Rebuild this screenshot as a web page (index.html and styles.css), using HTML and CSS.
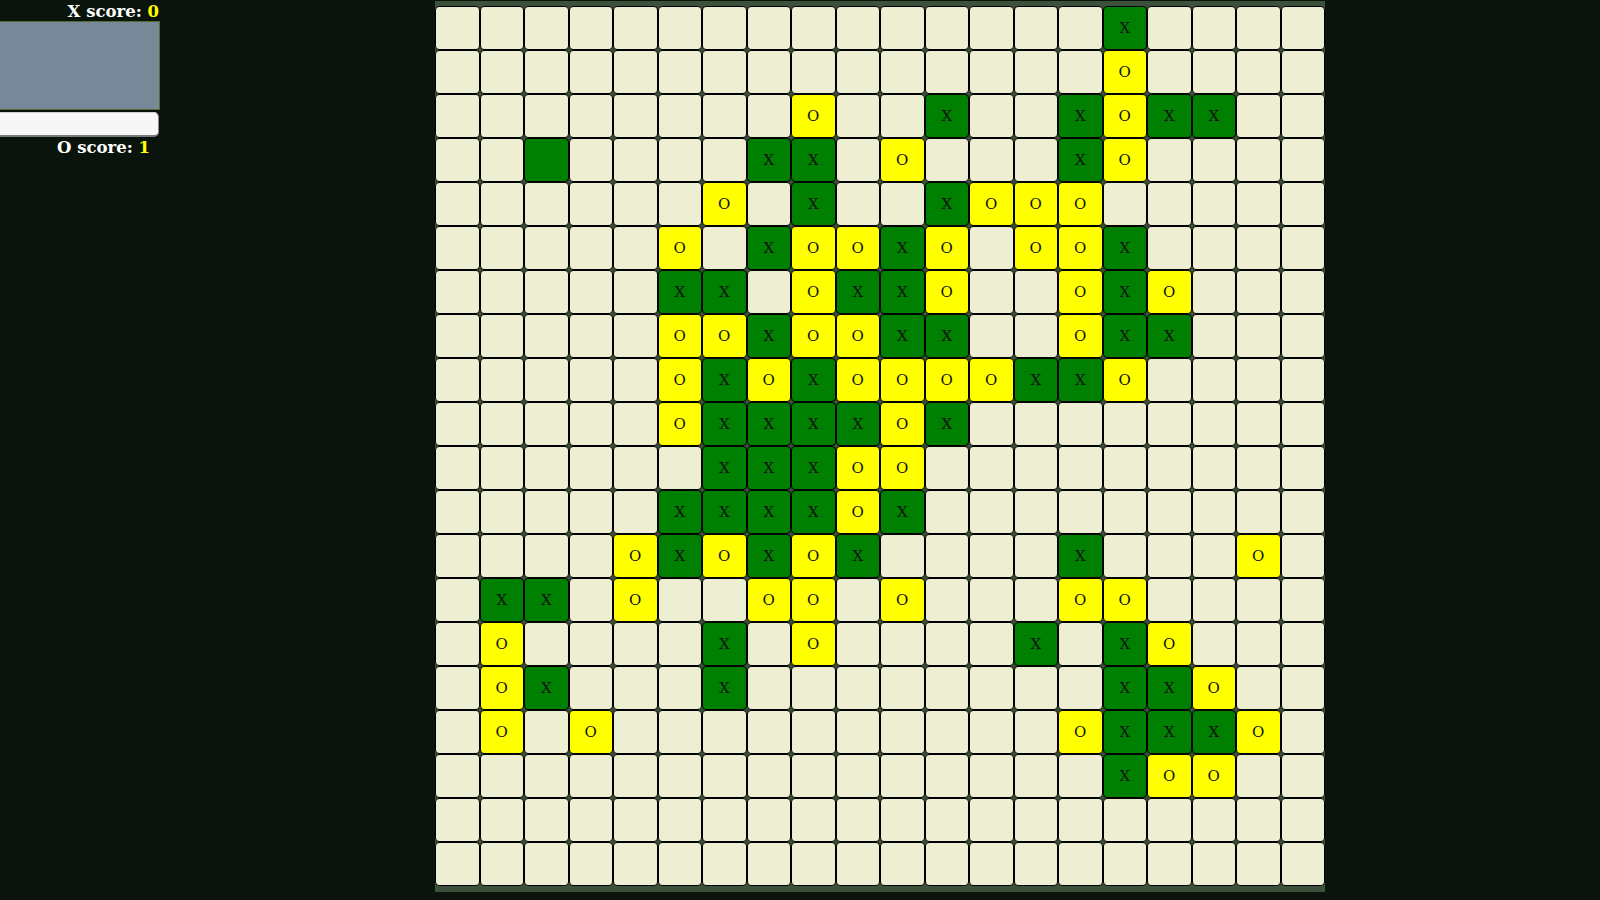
FILE: index.html
```html
<!DOCTYPE html>
<html>
<head>
<meta charset="utf-8">
<title>Board</title>
<link rel="stylesheet" href="styles.css">
</head>
<body>
<div class="page">
  <div class="panel">
    <div class="score score-x">X score: <span class="num">0</span></div>
    <div class="preview"></div>
    <div class="field"></div>
    <div class="score score-o">O score: <span class="num">1</span></div>
  </div>
  <div class="board">
<div class="c"></div><div class="c"></div><div class="c"></div><div class="c"></div><div class="c"></div><div class="c"></div><div class="c"></div><div class="c"></div><div class="c"></div><div class="c"></div><div class="c"></div><div class="c"></div><div class="c"></div><div class="c"></div><div class="c"></div><div class="c x">X</div><div class="c"></div><div class="c"></div><div class="c"></div><div class="c"></div>
<div class="c"></div><div class="c"></div><div class="c"></div><div class="c"></div><div class="c"></div><div class="c"></div><div class="c"></div><div class="c"></div><div class="c"></div><div class="c"></div><div class="c"></div><div class="c"></div><div class="c"></div><div class="c"></div><div class="c"></div><div class="c o">O</div><div class="c"></div><div class="c"></div><div class="c"></div><div class="c"></div>
<div class="c"></div><div class="c"></div><div class="c"></div><div class="c"></div><div class="c"></div><div class="c"></div><div class="c"></div><div class="c"></div><div class="c o">O</div><div class="c"></div><div class="c"></div><div class="c x">X</div><div class="c"></div><div class="c"></div><div class="c x">X</div><div class="c o">O</div><div class="c x">X</div><div class="c x">X</div><div class="c"></div><div class="c"></div>
<div class="c"></div><div class="c"></div><div class="c g"></div><div class="c"></div><div class="c"></div><div class="c"></div><div class="c"></div><div class="c x">X</div><div class="c x">X</div><div class="c"></div><div class="c o">O</div><div class="c"></div><div class="c"></div><div class="c"></div><div class="c x">X</div><div class="c o">O</div><div class="c"></div><div class="c"></div><div class="c"></div><div class="c"></div>
<div class="c"></div><div class="c"></div><div class="c"></div><div class="c"></div><div class="c"></div><div class="c"></div><div class="c o">O</div><div class="c"></div><div class="c x">X</div><div class="c"></div><div class="c"></div><div class="c x">X</div><div class="c o">O</div><div class="c o">O</div><div class="c o">O</div><div class="c"></div><div class="c"></div><div class="c"></div><div class="c"></div><div class="c"></div>
<div class="c"></div><div class="c"></div><div class="c"></div><div class="c"></div><div class="c"></div><div class="c o">O</div><div class="c"></div><div class="c x">X</div><div class="c o">O</div><div class="c o">O</div><div class="c x">X</div><div class="c o">O</div><div class="c"></div><div class="c o">O</div><div class="c o">O</div><div class="c x">X</div><div class="c"></div><div class="c"></div><div class="c"></div><div class="c"></div>
<div class="c"></div><div class="c"></div><div class="c"></div><div class="c"></div><div class="c"></div><div class="c x">X</div><div class="c x">X</div><div class="c"></div><div class="c o">O</div><div class="c x">X</div><div class="c x">X</div><div class="c o">O</div><div class="c"></div><div class="c"></div><div class="c o">O</div><div class="c x">X</div><div class="c o">O</div><div class="c"></div><div class="c"></div><div class="c"></div>
<div class="c"></div><div class="c"></div><div class="c"></div><div class="c"></div><div class="c"></div><div class="c o">O</div><div class="c o">O</div><div class="c x">X</div><div class="c o">O</div><div class="c o">O</div><div class="c x">X</div><div class="c x">X</div><div class="c"></div><div class="c"></div><div class="c o">O</div><div class="c x">X</div><div class="c x">X</div><div class="c"></div><div class="c"></div><div class="c"></div>
<div class="c"></div><div class="c"></div><div class="c"></div><div class="c"></div><div class="c"></div><div class="c o">O</div><div class="c x">X</div><div class="c o">O</div><div class="c x">X</div><div class="c o">O</div><div class="c o">O</div><div class="c o">O</div><div class="c o">O</div><div class="c x">X</div><div class="c x">X</div><div class="c o">O</div><div class="c"></div><div class="c"></div><div class="c"></div><div class="c"></div>
<div class="c"></div><div class="c"></div><div class="c"></div><div class="c"></div><div class="c"></div><div class="c o">O</div><div class="c x">X</div><div class="c x">X</div><div class="c x">X</div><div class="c x">X</div><div class="c o">O</div><div class="c x">X</div><div class="c"></div><div class="c"></div><div class="c"></div><div class="c"></div><div class="c"></div><div class="c"></div><div class="c"></div><div class="c"></div>
<div class="c"></div><div class="c"></div><div class="c"></div><div class="c"></div><div class="c"></div><div class="c"></div><div class="c x">X</div><div class="c x">X</div><div class="c x">X</div><div class="c o">O</div><div class="c o">O</div><div class="c"></div><div class="c"></div><div class="c"></div><div class="c"></div><div class="c"></div><div class="c"></div><div class="c"></div><div class="c"></div><div class="c"></div>
<div class="c"></div><div class="c"></div><div class="c"></div><div class="c"></div><div class="c"></div><div class="c x">X</div><div class="c x">X</div><div class="c x">X</div><div class="c x">X</div><div class="c o">O</div><div class="c x">X</div><div class="c"></div><div class="c"></div><div class="c"></div><div class="c"></div><div class="c"></div><div class="c"></div><div class="c"></div><div class="c"></div><div class="c"></div>
<div class="c"></div><div class="c"></div><div class="c"></div><div class="c"></div><div class="c o">O</div><div class="c x">X</div><div class="c o">O</div><div class="c x">X</div><div class="c o">O</div><div class="c x">X</div><div class="c"></div><div class="c"></div><div class="c"></div><div class="c"></div><div class="c x">X</div><div class="c"></div><div class="c"></div><div class="c"></div><div class="c o">O</div><div class="c"></div>
<div class="c"></div><div class="c x">X</div><div class="c x">X</div><div class="c"></div><div class="c o">O</div><div class="c"></div><div class="c"></div><div class="c o">O</div><div class="c o">O</div><div class="c"></div><div class="c o">O</div><div class="c"></div><div class="c"></div><div class="c"></div><div class="c o">O</div><div class="c o">O</div><div class="c"></div><div class="c"></div><div class="c"></div><div class="c"></div>
<div class="c"></div><div class="c o">O</div><div class="c"></div><div class="c"></div><div class="c"></div><div class="c"></div><div class="c x">X</div><div class="c"></div><div class="c o">O</div><div class="c"></div><div class="c"></div><div class="c"></div><div class="c"></div><div class="c x">X</div><div class="c"></div><div class="c x">X</div><div class="c o">O</div><div class="c"></div><div class="c"></div><div class="c"></div>
<div class="c"></div><div class="c o">O</div><div class="c x">X</div><div class="c"></div><div class="c"></div><div class="c"></div><div class="c x">X</div><div class="c"></div><div class="c"></div><div class="c"></div><div class="c"></div><div class="c"></div><div class="c"></div><div class="c"></div><div class="c"></div><div class="c x">X</div><div class="c x">X</div><div class="c o">O</div><div class="c"></div><div class="c"></div>
<div class="c"></div><div class="c o">O</div><div class="c"></div><div class="c o">O</div><div class="c"></div><div class="c"></div><div class="c"></div><div class="c"></div><div class="c"></div><div class="c"></div><div class="c"></div><div class="c"></div><div class="c"></div><div class="c"></div><div class="c o">O</div><div class="c x">X</div><div class="c x">X</div><div class="c x">X</div><div class="c o">O</div><div class="c"></div>
<div class="c"></div><div class="c"></div><div class="c"></div><div class="c"></div><div class="c"></div><div class="c"></div><div class="c"></div><div class="c"></div><div class="c"></div><div class="c"></div><div class="c"></div><div class="c"></div><div class="c"></div><div class="c"></div><div class="c"></div><div class="c x">X</div><div class="c o">O</div><div class="c o">O</div><div class="c"></div><div class="c"></div>
<div class="c"></div><div class="c"></div><div class="c"></div><div class="c"></div><div class="c"></div><div class="c"></div><div class="c"></div><div class="c"></div><div class="c"></div><div class="c"></div><div class="c"></div><div class="c"></div><div class="c"></div><div class="c"></div><div class="c"></div><div class="c"></div><div class="c"></div><div class="c"></div><div class="c"></div><div class="c"></div>
<div class="c"></div><div class="c"></div><div class="c"></div><div class="c"></div><div class="c"></div><div class="c"></div><div class="c"></div><div class="c"></div><div class="c"></div><div class="c"></div><div class="c"></div><div class="c"></div><div class="c"></div><div class="c"></div><div class="c"></div><div class="c"></div><div class="c"></div><div class="c"></div><div class="c"></div><div class="c"></div>
  </div>
</div>
</body>
</html>
```

FILE: styles.css
```css
html, body {
  margin: 0;
  padding: 0;
  background: #0a140c;
  height: 100%;
  overflow: hidden;
}

.page {
  display: flex;
  align-items: flex-start;
  font-family: "DejaVu Serif", serif;
}

.panel {
  width: 160px;
  flex: none;
}

.score {
  font-size: 16.5px;
  font-weight: bold;
  line-height: 21px;
  color: #ffffff;
  text-align: right;
  white-space: nowrap;
}

.score-x {
  padding-right: 1px;
  position: relative;
  top: 1px;
}

.score-o {
  padding-right: 10px;
}

.num {
  color: #ffff00;
}

.preview {
  height: 89px;
  margin-left: -2px;
  box-sizing: border-box;
  background: #778899;
  border: 1px solid #556b2f;
}

.field {
  height: 25px;
  margin-top: 2px;
  margin-left: -6px;
  margin-right: 1px;
  box-sizing: border-box;
  background: #f7f7f7;
  border-radius: 5px;
  border: 1px solid #d0d0d0;
  border-right-color: #8a8a8a;
  border-bottom: 2px solid #7a7a7a;
}

.board {
  margin-left: 275px;
  margin-top: 1px;
  width: 890px;
  padding: 5px 0 6px;
  background: #3c513a;
  display: grid;
  grid-template-columns: repeat(20, 1fr);
  grid-auto-rows: 44px;
}

.c {
  box-sizing: border-box;
  border: 1px solid #000;
  border-radius: 4px;
  background: #eeeed2;
  display: flex;
  align-items: center;
  justify-content: center;
  font-size: 15px;
  color: #111;
}

.c.x, .c.g {
  background: #008000;
}

.c.o {
  background: #ffff00;
}
```
